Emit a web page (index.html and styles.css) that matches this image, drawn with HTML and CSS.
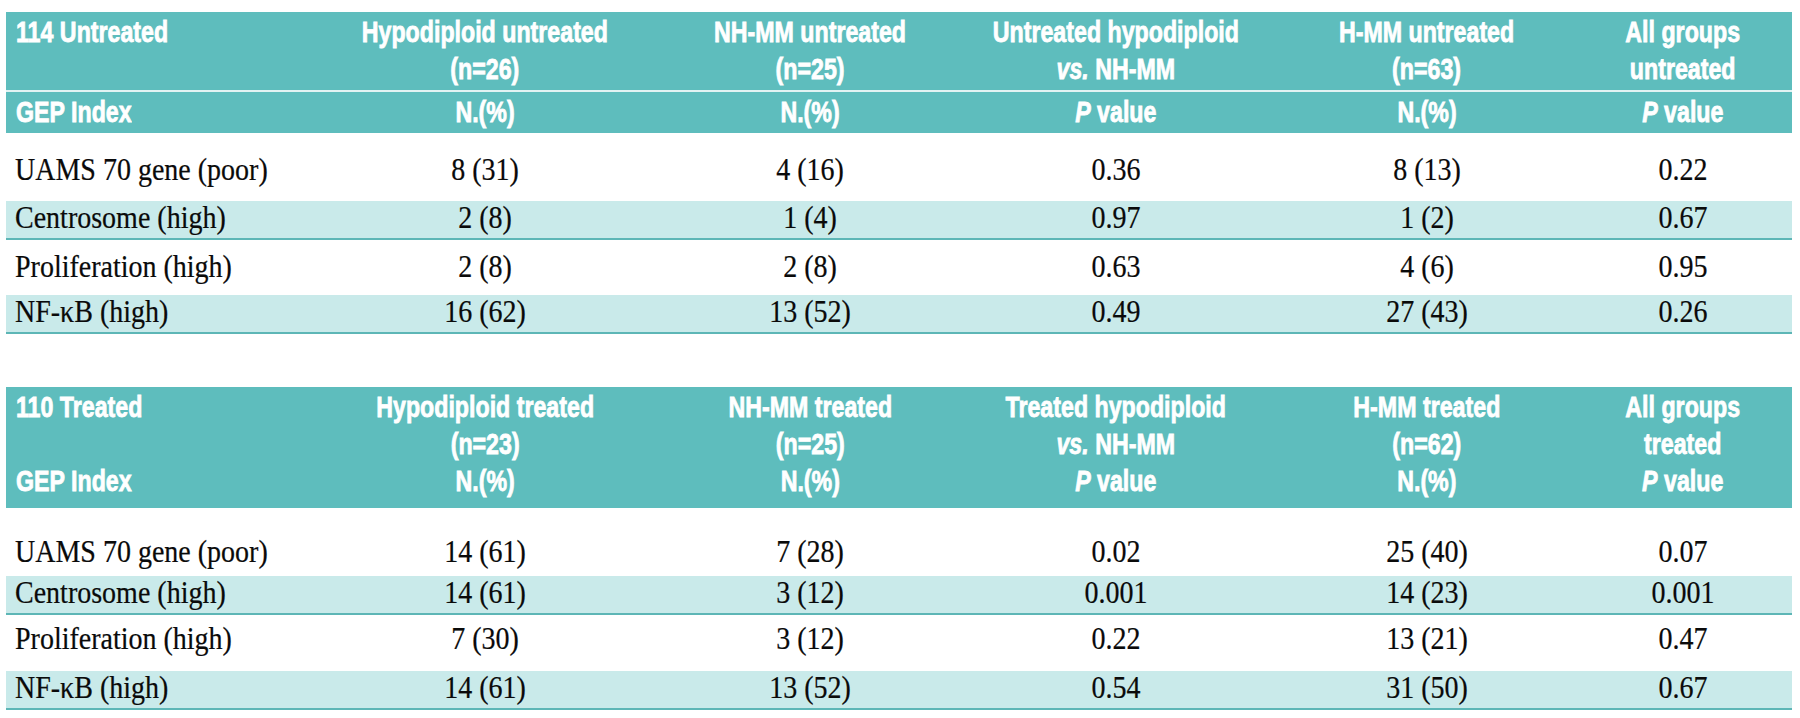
FILE: index.html
```html
<!DOCTYPE html>
<html lang="en">
<head>
<meta charset="utf-8">
<title>GEP Index table</title>
<link rel="stylesheet" href="styles.css">
</head>
<body>
<div class="page">
  <table class="gep">
    <colgroup>
      <col class="c1"><col class="c2"><col class="c3"><col class="c4"><col class="c5"><col class="c6">
    </colgroup>
    <thead>
      <tr class="hrow1">
        <th class="lab"><span class="hx">114 Untreated</span></th>
        <th><span class="hx">Hypodiploid untreated<br>(n=26)</span></th>
        <th><span class="hx">NH-MM untreated<br>(n=25)</span></th>
        <th><span class="hx">Untreated hypodiploid<br><i>vs.</i> NH-MM</span></th>
        <th><span class="hx">H-MM untreated<br>(n=63)</span></th>
        <th><span class="hx">All groups<br>untreated</span></th>
      </tr>
      <tr class="hrow2">
        <th class="lab"><span class="hx">GEP Index</span></th>
        <th><span class="hx">N.(%)</span></th>
        <th><span class="hx">N.(%)</span></th>
        <th><span class="hx"><i>P</i> value</span></th>
        <th><span class="hx">N.(%)</span></th>
        <th><span class="hx"><i>P</i> value</span></th>
      </tr>
    </thead>
    <tbody>
      <tr class="r-first">
        <td class="lab"><span class="tx">UAMS 70 gene (poor)</span></td><td><span class="tx">8 (31)</span></td><td><span class="tx">4 (16)</span></td><td><span class="tx">0.36</span></td><td><span class="tx">8 (13)</span></td><td><span class="tx">0.22</span></td>
      </tr>
      <tr class="r-band">
        <td class="lab"><span class="tx">Centrosome (high)</span></td><td><span class="tx">2 (8)</span></td><td><span class="tx">1 (4)</span></td><td><span class="tx">0.97</span></td><td><span class="tx">1 (2)</span></td><td><span class="tx">0.67</span></td>
      </tr>
      <tr class="r-plain">
        <td class="lab"><span class="tx">Proliferation (high)</span></td><td><span class="tx">2 (8)</span></td><td><span class="tx">2 (8)</span></td><td><span class="tx">0.63</span></td><td><span class="tx">4 (6)</span></td><td><span class="tx">0.95</span></td>
      </tr>
      <tr class="r-band">
        <td class="lab"><span class="tx">NF-κB (high)</span></td><td><span class="tx">16 (62)</span></td><td><span class="tx">13 (52)</span></td><td><span class="tx">0.49</span></td><td><span class="tx">27 (43)</span></td><td><span class="tx">0.26</span></td>
      </tr>
    </tbody>
  </table>

  <table class="gep gep-second">
    <colgroup>
      <col class="c1"><col class="c2"><col class="c3"><col class="c4"><col class="c5"><col class="c6">
    </colgroup>
    <thead>
      <tr class="hrow3">
        <th class="lab"><span class="hx">110 Treated<br>&nbsp;<br>GEP Index</span></th>
        <th><span class="hx">Hypodiploid treated<br>(n=23)<br>N.(%)</span></th>
        <th><span class="hx">NH-MM treated<br>(n=25)<br>N.(%)</span></th>
        <th><span class="hx">Treated hypodiploid<br><i>vs.</i> NH-MM<br><i>P</i> value</span></th>
        <th><span class="hx">H-MM treated<br>(n=62)<br>N.(%)</span></th>
        <th><span class="hx">All groups<br>treated<br><i>P</i> value</span></th>
      </tr>
    </thead>
    <tbody>
      <tr class="r-first r-first-b">
        <td class="lab"><span class="tx">UAMS 70 gene (poor)</span></td><td><span class="tx">14 (61)</span></td><td><span class="tx">7 (28)</span></td><td><span class="tx">0.02</span></td><td><span class="tx">25 (40)</span></td><td><span class="tx">0.07</span></td>
      </tr>
      <tr class="r-band">
        <td class="lab"><span class="tx">Centrosome (high)</span></td><td><span class="tx">14 (61)</span></td><td><span class="tx">3 (12)</span></td><td><span class="tx">0.001</span></td><td><span class="tx">14 (23)</span></td><td><span class="tx">0.001</span></td>
      </tr>
      <tr class="r-plain r-plain-b">
        <td class="lab"><span class="tx">Proliferation (high)</span></td><td><span class="tx">7 (30)</span></td><td><span class="tx">3 (12)</span></td><td><span class="tx">0.22</span></td><td><span class="tx">13 (21)</span></td><td><span class="tx">0.47</span></td>
      </tr>
      <tr class="r-band">
        <td class="lab"><span class="tx">NF-κB (high)</span></td><td><span class="tx">14 (61)</span></td><td><span class="tx">13 (52)</span></td><td><span class="tx">0.54</span></td><td><span class="tx">31 (50)</span></td><td><span class="tx">0.67</span></td>
      </tr>
    </tbody>
  </table>
</div>
</body>
</html>
```

FILE: styles.css
```css
html, body {
  margin: 0;
  padding: 0;
  background: #ffffff;
}

.page {
  padding: 12px 8px 0 6px;
  width: 1786px;
}

.gep {
  width: 1786px;
  table-layout: fixed;
  border-collapse: separate;
  border-spacing: 0;
}

.gep-second {
  margin-top: 53px;
}

.c1 { width: 296px; }
.c2 { width: 366px; }
.c3 { width: 284px; }
.c4 { width: 328px; }
.c5 { width: 294px; }
.c6 { width: 218px; }

.gep th {
  background: #5ebdbd;
  color: #ffffff;
  font-family: "Liberation Sans", Arial, sans-serif;
  font-weight: 700;
  font-size: 29px;
  line-height: 37px;
  text-align: center;
  vertical-align: top;
  padding: 2px 0;
  white-space: nowrap;
}

.hx {
  display: inline-block;
  transform: scaleX(0.8);
  transform-origin: 50% 0;
  -webkit-text-stroke: 0.8px #ffffff;
}

.gep th.lab .hx {
  transform-origin: 0 0;
}

.gep th.lab,
.gep td.lab {
  text-align: left;
  padding-left: 9px;
}

.gep th.lab {
  padding-left: 10px;
}

.gep th i {
  font-style: italic;
}

.hrow1 th {
  border-bottom: 2px solid #e2f3f3;
}

.hrow3 th {
  padding: 2px 0 8px;
}

.gep td {
  font-family: "Liberation Serif", "Times New Roman", serif;
  font-size: 28px;
  line-height: 37px;
  color: #0a0a0a;
  text-align: center;
  vertical-align: top;
  padding: 0;
  white-space: nowrap;
}

.tx {
  display: inline-block;
  transform: scaleY(1.14);
  transform-origin: 50% 100%;
  -webkit-text-stroke: 0.2px #0a0a0a;
}

.gep td.lab .tx {
  transform-origin: 0 100%;
}

.r-first td {
  padding-top: 20px;
  padding-bottom: 11px;
}

.r-first-b td {
  padding-top: 27px;
  padding-bottom: 4px;
}

.r-band td {
  background: #c9eaea;
  border-bottom: 2px solid #5db6b6;
}

.r-plain td {
  padding-top: 10px;
  padding-bottom: 8px;
}

.r-plain-b td {
  padding-top: 7px;
  padding-bottom: 12px;
}
```
